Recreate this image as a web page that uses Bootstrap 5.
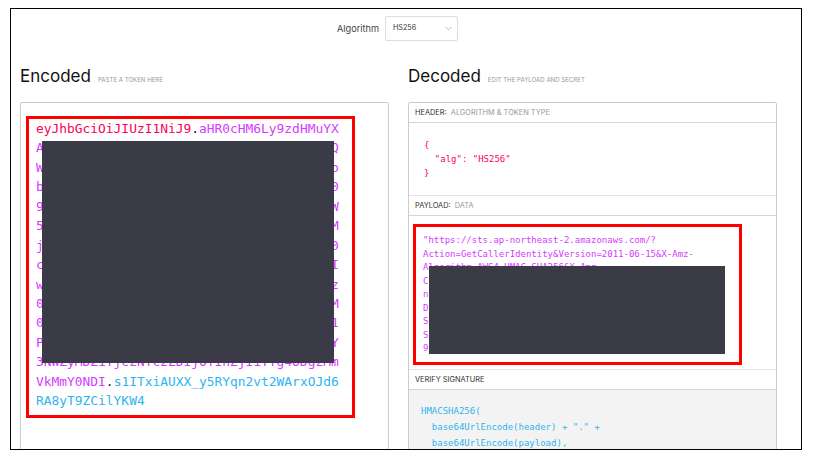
<!DOCTYPE html>
<html lang="en">
<head>
<meta charset="utf-8">
<title>JWT debugger</title>
<link href="https://cdn.jsdelivr.net/npm/bootstrap@5.3.0/dist/css/bootstrap.min.css" rel="stylesheet">
<style>
html,body{background:#fff;height:461px;overflow:hidden}
body{font-family:Inter,"Liberation Sans",sans-serif;color:#222}
.frame{margin:8px 0 0 10px;width:792px;height:442px;border:1px solid #000;overflow:hidden}
.algo-row{margin-top:7px;height:25px;padding-right:17px;gap:6px}
.algo-label{font-size:9.2px;color:#444}
.algo-select{width:73px;height:25px;border:1px solid #ddd;border-radius:2px;padding:0 5px 0 7px;font-size:7.2px;color:#333}
.cols{padding-left:9px;gap:19px;margin-top:24px}
.pane{width:369px}
.pane-head{gap:7px;height:22px;margin-bottom:15px}
.pane-title{font-size:17px;line-height:22px;font-weight:400;color:#111;margin:0}
.pane-hint{font-size:6.1px;color:#999;text-transform:uppercase}
.box{border:1px solid #ccc;border-radius:2px;padding-bottom:60px}
.red-a,.red-b{border:3px solid #f00;width:329px}
.red-a{margin:13px 0 0 5px;padding:0 0 5px 7px;height:302px;font-size:12.9px;line-height:19.43px}
.red-b{margin:8px 0 4px 4px;padding:7px 0 0 7px;height:141px;font-size:9px;line-height:13.5px}
.code{font-family:"DejaVu Sans Mono","Liberation Mono",monospace}
.ln{display:block;white-space:pre}
.c-r{color:#fb015b}.c-p{color:#d63aff}.c-b{color:#2fb4ee}.c-k{color:#111}
.cover-a,.cover-b{position:absolute;background:#3a3b46}
.cover-a{left:13px;top:22px;width:292px;height:222px}
.cover-b{left:13px;top:39px;width:296px;height:88px}
.sec-head{font-size:7.4px;line-height:19px;height:20px;padding-left:6px;border-bottom:1px solid #d6d6d6;color:#333;text-transform:uppercase}
.sec-head em{font-style:normal;color:#999;margin-left:2px}
.sec-top{border-top:1px solid #e6e6e6;height:21px}
.sec-one{height:72px;padding:15px 0 0 15px;font-size:9px;line-height:14px;border:0}
.sec-grey{background:#f3f3f3;padding:13px 0 30px 12px;font-size:9px;line-height:16px}
.dec{padding-bottom:0}
</style>
</head>
<body class="m-0">
<div class="frame position-relative">
  <div class="algo-row d-flex justify-content-center align-items-center">
    <span class="algo-label">Algorithm</span>
    <div class="algo-select d-flex align-items-center justify-content-between">
      <span>HS256</span>
      <svg width="7" height="5" viewBox="0 0 7 5" aria-hidden="true"><path d="M.7 1l2.8 2.8L6.3 1" fill="none" stroke="#999" stroke-width=".7"/></svg>
    </div>
  </div>
  <div class="cols d-flex">
    <section class="pane">
      <div class="pane-head d-flex align-items-baseline"><h2 class="pane-title">Encoded</h2><span class="pane-hint">Paste a token here</span></div>
      <div class="box">
        <div class="red-a code position-relative">
<span class="ln"><span class="c-r">eyJhbGciOiJIUzI1NiJ9</span><span class="c-k">.</span><span class="c-p">aHR0cHM6Ly9zdHMuYX</span></span>
<span class="ln c-p">A                                     Q</span>
<span class="ln c-p">W                                     o</span>
<span class="ln c-p">b                                     0</span>
<span class="ln c-p">9                                     W</span>
<span class="ln c-p">5                                     M</span>
<span class="ln c-p">j                                     0</span>
<span class="ln c-p">c                                     I</span>
<span class="ln c-p">w                                     z</span>
<span class="ln c-p">0                                     M</span>
<span class="ln c-p">0                                     1</span>
<span class="ln c-p">P                                     Y</span>
<span class="ln c-p">3NWZyMDZ1YjczNTc2ZDIjOTIhZjI1YTg4ODgzMm</span>
<span class="ln"><span class="c-p">VkMmY0NDI</span><span class="c-k">.</span><span class="c-b">s1ITxiAUXX_y5RYqn2vt2WArxOJd6</span></span>
<span class="ln c-b">RA8yT9ZCilYKW4</span>
          <div class="cover-a"></div>
        </div>
      </div>
    </section>
    <section class="pane">
      <div class="pane-head d-flex align-items-baseline"><h2 class="pane-title">Decoded</h2><span class="pane-hint">Edit the payload and secret</span></div>
      <div class="box dec">
        <div class="sec-head">Header: <em>Algorithm &amp; Token Type</em></div>
        <div class="sec-one code c-r"><span class="ln">{</span><span class="ln">  "alg": "HS256"</span><span class="ln">}</span></div>
        <div class="sec-head sec-top">Payload: <em>Data</em></div>
        <div class="red-b code c-p position-relative">
<span class="ln">"https://sts.ap-northeast-2.amazonaws.com/?</span>
<span class="ln">Action=GetCallerIdentity&amp;Version=2011-06-15&amp;X-Amz-</span>
<span class="ln">Algorithm=AWS4-HMAC-SHA256&amp;X-Amz-</span>
<span class="ln">C</span>
<span class="ln">n</span>
<span class="ln">D</span>
<span class="ln">S</span>
<span class="ln">S</span>
<span class="ln">9</span>
          <div class="cover-b"></div>
        </div>
        <div class="sec-head sec-top">Verify Signature</div>
        <div class="sec-grey code c-b"><span class="ln">HMACSHA256(</span><span class="ln">  base64UrlEncode(header) + "." +</span><span class="ln">  base64UrlEncode(payload),</span></div>
      </div>
    </section>
  </div>
</div>
</body>
</html>
